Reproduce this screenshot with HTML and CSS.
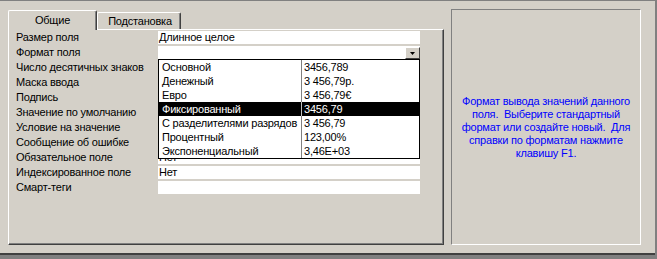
FILE: index.html
```html
<html>

<head>
  <link rel="stylesheet" href="styles.css">
</head>

<body>
  <div class="window">
    <div class="content">
      <!-- Left: tab control with field properties -->
      <div class="tab-area">
        <div class="tabs">
          <div class="tab active">Общие</div>
          <div class="tab">Подстановка</div>
        </div>
        <div class="page">
          <div class="props">
            <div class="label">Размер поля</div>
            <div class="field">Длинное целое</div>
            <div class="label">Формат поля</div>
            <div class="field combo">
              <span class="combo-btn">
                <svg width="5" height="3" viewBox="0 0 5 3"><polygon points="0,0 5,0 2.5,3" fill="#000"/></svg>
              </span>
            </div>
            <div class="label">Число десятичных знаков</div>
            <div class="field"></div>
            <div class="label">Маска ввода</div>
            <div class="field"></div>
            <div class="label">Подпись</div>
            <div class="field"></div>
            <div class="label">Значение по умолчанию</div>
            <div class="field"></div>
            <div class="label">Условие на значение</div>
            <div class="field"></div>
            <div class="label">Сообщение об ошибке</div>
            <div class="field"></div>
            <div class="label">Обязательное поле</div>
            <div class="field">Нет</div>
            <div class="label">Индексированное поле</div>
            <div class="field">Нет</div>
            <div class="label">Смарт-теги</div>
            <div class="field"></div>
          </div>

          <!-- Open dropdown list of the format combo -->
          <div class="dropdown">
            <div class="opt"><span class="name">Основной</span><span class="sample">3456,789</span></div>
            <div class="opt"><span class="name">Денежный</span><span class="sample">3 456,79р.</span></div>
            <div class="opt"><span class="name">Евро</span><span class="sample">3 456,79€</span></div>
            <div class="opt selected"><span class="name">Фиксированный</span><span class="sample">3456,79</span></div>
            <div class="opt"><span class="name">С разделителями разрядов</span><span class="sample">3 456,79</span></div>
            <div class="opt"><span class="name">Процентный</span><span class="sample">123,00%</span></div>
            <div class="opt"><span class="name">Экспоненциальный</span><span class="sample">3,46E+03</span></div>
          </div>
        </div>
      </div>

      <!-- Right: help text -->
      <div class="help">
        <p>Формат вывода значений данного<br>поля.&nbsp; Выберите стандартный<br>формат или создайте новый.&nbsp; Для<br>справки по форматам нажмите<br>клавишу F1.</p>
      </div>
    </div>
    <div class="bottom-edge"></div>
  </div>
</body>

</html>
```

FILE: styles.css
```css
body {
  margin: 0;
  background-color: #d4d0c8;
  font-family: "Liberation Sans", Arial, sans-serif;
  font-size: 11px;
  letter-spacing: -0.2px;
  color: #000;
}

.window {
  width: 657px;
  height: 259px;
  box-sizing: border-box;
  border-top: 1px solid #808080;
  border-right: 2px solid #808080;
  display: flex;
  flex-direction: column;
}

.content {
  flex: 1;
  display: flex;
  padding: 8px 0 0 8px;
}

.bottom-edge {
  height: 4px;
  border-top: 2px solid #404040;
  background-color: #808080;
}

/* Tabs */
.tab-area {
  width: 436px;
  margin-top: 1px;
}

.tabs {
  display: flex;
  height: 19px;
  align-items: flex-start;
}

.tab {
  box-sizing: border-box;
  height: 17px;
  margin-top: 2px;
  border-top: 1px solid #fff;
  border-left: 1px solid #fff;
  border-right: 1px solid #404040;
  box-shadow: inset -1px 0 #808080;
  border-radius: 2px 2px 0 0;
  text-align: center;
  line-height: 16px;
  background-color: #d4d0c8;
}

.tab.active {
  position: relative;
  z-index: 1;
  width: 89px;
  height: 20px;
  margin-top: 0;
  line-height: 18px;
}

.tab:not(.active) {
  width: 84px;
  padding-left: 2px;
}

.page {
  position: relative;
  box-sizing: border-box;
  height: 216px;
  border-top: 1px solid #fff;
  border-left: 1px solid #fff;
  border-right: 1px solid #404040;
  border-bottom: 1px solid #404040;
  box-shadow: inset -1px -1px #808080;
  padding: 0 22px 0 7px;
}

/* Property grid */
.props {
  display: grid;
  grid-template-columns: 142px 262px;
  grid-auto-rows: 15px;
}

.label {
  line-height: 15px;
  white-space: nowrap;
}

.field {
  background-color: #fff;
  height: 13px;
  line-height: 13px;
  margin-top: 1px;
  padding-left: 1px;
}

.combo {
  position: relative;
}

.combo-btn {
  position: absolute;
  right: 0;
  top: 1px;
  width: 15px;
  height: 12px;
  box-sizing: border-box;
  background-color: #d4d0c8;
  border-top: 1px solid #fff;
  border-left: 1px solid #fff;
  border-right: 1px solid #404040;
  border-bottom: 1px solid #404040;
  display: flex;
  align-items: center;
  justify-content: center;
}

/* Dropdown list */
.dropdown {
  position: absolute;
  left: 149px;
  top: 29px;
  width: 262px;
  box-sizing: border-box;
  border: 1px solid #000;
  background-color: #fff;
}

.opt {
  display: flex;
  height: 14px;
  line-height: 14px;
}

.opt .name {
  width: 143px;
  box-sizing: border-box;
  padding-left: 3px;
  border-right: 1px solid #808080;
  white-space: nowrap;
}

.opt .sample {
  padding-left: 2px;
}

.opt.selected {
  background-color: #000;
  color: #fff;
}

.opt.selected .name {
  border-right-color: #c0c0c0;
}

/* Help panel */
.help {
  margin-left: 7px;
  width: 190px;
  height: 236px;
  box-sizing: border-box;
  border: 1px solid;
  border-color: #808080 #fff #fff #808080;
  display: flex;
  align-items: center;
  justify-content: center;
  text-align: center;
  color: #0000ff;
  line-height: 13px;
}

.help p {
  margin: 0;
  white-space: nowrap;
}
```
